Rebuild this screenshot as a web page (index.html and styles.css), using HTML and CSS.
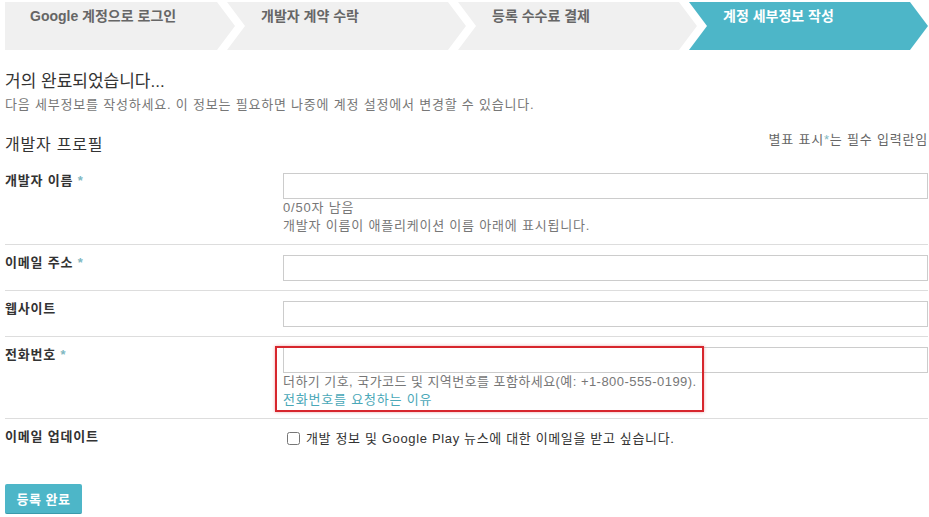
FILE: index.html
```html
<!doctype html>
<html>
<head>
<meta charset="utf-8">
<link rel="stylesheet" href="styles.css">
</head>
<body>
	<div class="page">
		<ul class="steps">
			<li class="step first">Google 계정으로 로그인</li>
			<li class="step">개발자 계약 수락</li>
			<li class="step">등록 수수료 결제</li>
			<li class="step active">계정 세부정보 작성</li>
		</ul>

		<h1 class="title">거의 완료되었습니다...</h1>
		<p class="sub">다음 세부정보를 작성하세요. 이 정보는 필요하면 나중에 계정 설정에서 변경할 수 있습니다.</p>

		<div class="profile-head">
			<h2>개발자 프로필</h2>
			<span class="req-note">별표 표시<i>*</i>는 필수 입력란임</span>
		</div>

		<div class="form">
			<div class="row">
				<label class="lbl">개발자 이름 <i>*</i></label>
				<div class="field">
					<input type="text" class="txt">
					<div class="hint">0/50자 남음</div>
					<div class="hint">개발자 이름이 애플리케이션 이름 아래에 표시됩니다.</div>
				</div>
			</div>
			<div class="row">
				<label class="lbl">이메일 주소 <i>*</i></label>
				<div class="field"><input type="text" class="txt"></div>
			</div>
			<div class="row">
				<label class="lbl">웹사이트</label>
				<div class="field"><input type="text" class="txt"></div>
			</div>
			<div class="row phone">
				<label class="lbl">전화번호 <i>*</i></label>
				<div class="field">
					<input type="text" class="txt">
					<div class="hint tight">더하기 기호, 국가코드 및 지역번호를 포함하세요(예: +1-800-555-0199).</div>
					<div class="hint"><a href="#">전화번호를 요청하는 이유</a></div>
				</div>
				<div class="mark"></div>
			</div>
			<div class="row last">
				<label class="lbl">이메일 업데이트</label>
				<div class="field check">
					<input type="checkbox" class="cb">
					<span>개발 정보 및 Google Play 뉴스에 대한 이메일을 받고 싶습니다.</span>
				</div>
			</div>
		</div>

		<button class="btn">등록 완료</button>
	</div>
</body>
</html>
```

FILE: styles.css
```css
*{
	margin:0;
	padding:0;
	box-sizing:border-box;
}
body{
	background:#fff;
	font-family:"Liberation Sans","Noto Sans CJK KR",sans-serif;
	font-size:13px;
	letter-spacing:.8px;
	color:#333;
}
.page{
	padding:2px 1px 0 5px;
}
/* steps */
.steps{
	list-style:none;
	display:flex;
	height:48px;
}
.step{
	flex:1;
	margin-left:-8px;
	background:#f0f0f0;
	color:#666;
	font-weight:bold;
	font-size:14px;
	letter-spacing:0;
	line-height:18px;
	padding:5px 0 0 34px;
	clip-path:polygon(0 0,calc(100% - 18px) 0,100% 50%,calc(100% - 18px) 100%,0 100%,18px 50%);
}
.step.first{
	margin-left:0;
	padding-left:25px;
	clip-path:polygon(0 0,calc(100% - 18px) 0,100% 50%,calc(100% - 18px) 100%,0 100%);
}
.step.active{
	background:#4db6c8;
	color:#fff;
}
/* intro */
.title{
	font-size:17px;
	font-weight:normal;
	letter-spacing:0;
	line-height:22px;
	margin-top:21px;
	color:#333;
}
.sub{
	color:#777;
	line-height:18px;
	margin-top:3px;
}
.profile-head{
	display:flex;
	justify-content:space-between;
	align-items:flex-start;
	margin-top:12px;
	height:37px;
}
.profile-head h2{
	font-size:16px;
	font-weight:normal;
	line-height:20px;
	margin-top:9px;
}
.req-note{
	color:#666;
	line-height:18px;
	padding-top:5px;
}
.req-note i,.lbl i{
	font-style:normal;
	color:#7fb8c2;
}
/* form */
.row{
	display:flex;
	padding:10px 0 9px;
	border-bottom:1px solid #ddd;
	position:relative;
}
.row.last{
	border-bottom:none;
	padding-top:10px;
}
.lbl{
	width:278px;
	font-weight:bold;
	line-height:16px;
	color:#333;
}
.field{
	flex:1;
}
.txt{
	display:block;
	width:100%;
	height:26px;
	border:1px solid #ccc;
	background:#fff;
}
.hint{
	color:#777;
	line-height:18px;
}
.hint.tight{
	letter-spacing:.45px;
}
.hint a{
	color:#4aa8b8;
	text-decoration:none;
}
.check{
	display:flex;
	align-items:center;
	height:16px;
	color:#333;
	letter-spacing:.65px;
}
.cb{
	width:13px;
	height:13px;
	margin:2px 6px 0 4px;
}
.mark{
	position:absolute;
	left:270px;
	top:9px;
	width:429px;
	height:66px;
	border:2px solid #d7262d;
	box-shadow:0 0 3px rgba(215,38,45,.4);
}
.btn{
	margin-top:30px;
	width:77px;
	height:30px;
	border:none;
	border-bottom:1px solid #3a9aab;
	border-radius:2px;
	background:#4db6c8;
	color:#fff;
	font-weight:bold;
	font-size:13px;
	letter-spacing:.5px;
	font-family:"Liberation Sans","Noto Sans CJK KR",sans-serif;
}
```
